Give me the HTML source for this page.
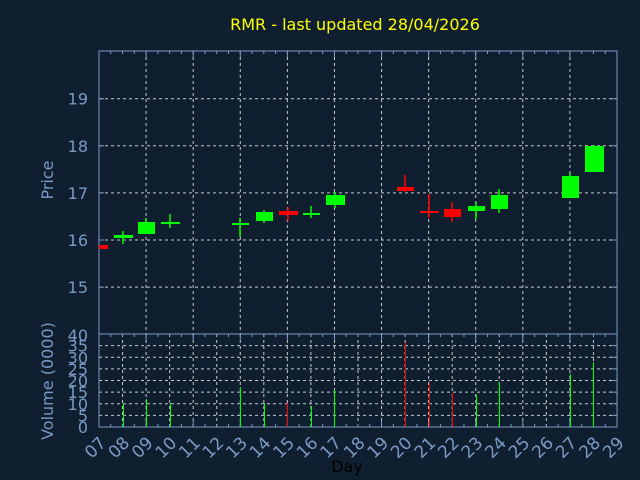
<!DOCTYPE html>
<html><head><meta charset="utf-8"><style>
html,body{margin:0;padding:0;background:#101f30;}
svg{display:block}
text{font-family:"DejaVu Sans","Liberation Sans",sans-serif;}
</style></head><body>
<svg id="s" width="640" height="480" xmlns="http://www.w3.org/2000/svg">
<rect width="640" height="480" fill="#101f30"/>
<text x="355" y="30" fill="#ffff00" font-size="16" text-anchor="middle">RMR - last updated 28/04/2026</text>
<g id="g"></g>
<text x="347" y="472" fill="#000" font-size="16" text-anchor="middle">Day</text>
<text transform="translate(53,180) rotate(-90)" fill="#7a9ac4" font-size="16" text-anchor="middle">Price</text>
<text transform="translate(53,381) rotate(-90)" fill="#7a9ac4" font-size="16" text-anchor="middle">Volume (0000)</text>
</svg>
<script>
var g=document.getElementById('g'),h='';
var L=99,R=617,T=51,M=334,B=427,dx=(R-L)/22;
var ax='#7a9ac4',gr='#c8c8c8';
function X(d){return L+(d-7)*dx;}
[19,18,17,16,15].forEach(function(p){var y=240-(p-16)*47.1;
h+='<line x1="'+L+'" x2="'+R+'" y1="'+y+'" y2="'+y+'" stroke="'+gr+'" stroke-dasharray="3,3"/>';
h+='<line x1="'+L+'" x2="'+(L+5)+'" y1="'+y+'" y2="'+y+'" stroke="'+ax+'"/><line x1="'+(R-5)+'" x2="'+R+'" y1="'+y+'" y2="'+y+'" stroke="'+ax+'"/>';
h+='<text x="88" y="'+(y+6)+'" fill="'+ax+'" font-size="16" text-anchor="end">'+p+'</text>';});
h+='<text x="88" y="'+(M+7)+'" fill="'+ax+'" font-size="16" text-anchor="end">40</text>';
for(var d=9;d<=27;d+=2){var x=X(d);h+='<line x1="'+x+'" x2="'+x+'" y1="'+T+'" y2="'+M+'" stroke="'+gr+'" stroke-dasharray="3,3"/>';}
for(var v=5;v<=35;v+=5){var y=B-v*2.325;h+='<line x1="'+L+'" x2="'+R+'" y1="'+y+'" y2="'+y+'" stroke="'+gr+'" stroke-dasharray="3,3"/>';
h+='<line x1="'+(R-5)+'" x2="'+R+'" y1="'+y+'" y2="'+y+'" stroke="'+ax+'"/>';
h+='<text x="88" y="'+(y+6)+'" fill="'+ax+'" font-size="16" text-anchor="end">'+v+'</text>';}
h+='<text x="88" y="'+(B+6)+'" fill="'+ax+'" font-size="16" text-anchor="end">0</text>';
for(var d=8;d<=28;d++){var x=X(d);h+='<line x1="'+x+'" x2="'+x+'" y1="'+M+'" y2="'+B+'" stroke="'+gr+'" stroke-dasharray="3,3"/>';}
for(var i=0;i<=44;i++){var x=L+i*dx/2,len=(i%4==0)?6:3;
h+='<line x1="'+x+'" x2="'+x+'" y1="'+T+'" y2="'+(T+len)+'" stroke="'+ax+'"/>';
h+='<line x1="'+x+'" x2="'+x+'" y1="'+M+'" y2="'+(M+len)+'" stroke="'+ax+'"/>';
h+='<line x1="'+x+'" x2="'+x+'" y1="'+B+'" y2="'+(B-len)+'" stroke="'+ax+'"/>';}
h+='<rect x="'+L+'" y="'+T+'" width="'+(R-L)+'" height="'+(B-T)+'" fill="none" stroke="'+ax+'"/>';
h+='<line x1="'+L+'" x2="'+R+'" y1="'+M+'" y2="'+M+'" stroke="'+ax+'"/>';
for(var d=7;d<=29;d++){var x=X(d);var s=(d<10?'0':'')+d;
h+='<text transform="translate('+(x+8)+',444) rotate(-45)" fill="'+ax+'" font-size="17" text-anchor="end">'+s+'</text>';}
var G='#00ff00',Rd='#ff0000';
var c=[[103,99,108,245,249,245,249,Rd],[123,114,133,235,238,231,244,G],[146,138,155,222,234,218,234,G],[170,161,180,222,224,214,228,G],
[240,232,249,223,225,218,237,G],[264,256,273,212,221,210,223,G],[288,279,298,211,215,207,221,Rd],[311,303,320,213,215,206,218,G],
[335,326,345,195,205,192,208,G],[405,397,414,187,191,175,192,Rd],[429,420,439,211,213,194,218,Rd],[452,444,461,209,217,202,222,Rd],
[476,468,485,206,211,202,219,G],[499,491,508,195,209,189,213,G],[570,562,579,176,198,173,198,G],[594,585,604,146,172,145,172,G]];
c.forEach(function(k){h+='<line x1="'+k[0]+'" x2="'+k[0]+'" y1="'+k[5]+'" y2="'+k[6]+'" stroke="'+k[7]+'" stroke-width="1.5"/>';
h+='<rect x="'+k[1]+'" y="'+k[3]+'" width="'+(k[2]-k[1])+'" height="'+(k[4]-k[3])+'" fill="'+k[7]+'"/>';});
var vb=[[123,403,G],[146,399,G],[170,403,G],[240,387,G],[264,403,G],[287,403,Rd],[311,406,G],[334,390,G],[405,343,Rd],[429,383,Rd],[452,393,Rd],[476,395,G],[499,382,G],[570,374,G],[593,362,G]];
vb.forEach(function(k){h+='<line x1="'+(k[0]+0.5)+'" x2="'+(k[0]+0.5)+'" y1="'+k[1]+'" y2="'+B+'" stroke="'+k[2]+'" stroke-width="1"/>';});
g.innerHTML=h;
</script>
</body></html>
